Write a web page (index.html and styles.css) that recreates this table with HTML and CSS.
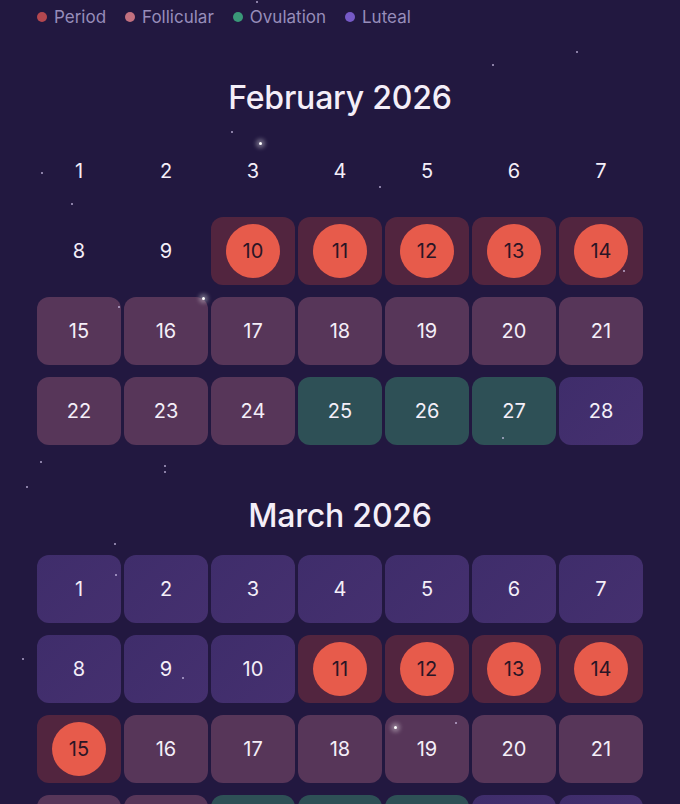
FILE: index.html
```html
<!DOCTYPE html>
<html>
<head>
<meta charset="utf-8">
<link rel="stylesheet" href="styles.css">
</head>
<body>
<div class="page">
  <div class="stars">
    <span class="star glow" style="left:259px;top:142px"></span>
    <span class="star glow" style="left:202px;top:297px"></span>
    <span class="star glow" style="left:394px;top:726px"></span>
    <span class="star" style="left:492px;top:64px"></span>
    <span class="star" style="left:576px;top:51px"></span>
    <span class="star" style="left:41px;top:172px"></span>
    <span class="star" style="left:164px;top:471px"></span>
    <span class="star" style="left:379px;top:186px"></span>
    <span class="star" style="left:40px;top:461px"></span>
    <span class="star" style="left:71px;top:203px"></span>
    <span class="star" style="left:256px;top:1px"></span>
    <span class="star" style="left:231px;top:131px"></span>
    <span class="star" style="left:164px;top:465px"></span>
    <span class="star" style="left:114px;top:543px"></span>
    <span class="star" style="left:680px;top:498px"></span>
    <span class="star" style="left:115px;top:574px"></span>
    <span class="star" style="left:22px;top:658px"></span>
    <span class="star" style="left:455px;top:722px"></span>
    <span class="star" style="left:524px;top:817px"></span>
    <span class="star" style="left:182px;top:677px"></span>
    <span class="star" style="left:502px;top:437px"></span>
    <span class="star" style="left:623px;top:270px"></span>
    <span class="star" style="left:118px;top:306px"></span>
    <span class="star" style="left:26px;top:486px"></span>
  </div>

  <div class="legend">
    <span class="item"><i class="dot period"></i>Period</span>
    <span class="item"><i class="dot follicular"></i>Follicular</span>
    <span class="item"><i class="dot ovulation"></i>Ovulation</span>
    <span class="item"><i class="dot luteal"></i>Luteal</span>
  </div>

  <section class="month">
    <h2 class="title">February 2026</h2>
    <div class="grid">
      <div class="day">1</div><div class="day">2</div><div class="day">3</div><div class="day">4</div><div class="day">5</div><div class="day">6</div><div class="day">7</div>
      <div class="day">8</div><div class="day">9</div>
      <div class="day p"><span class="circle">10</span></div>
      <div class="day p"><span class="circle">11</span></div>
      <div class="day p"><span class="circle">12</span></div>
      <div class="day p"><span class="circle">13</span></div>
      <div class="day p"><span class="circle">14</span></div>
      <div class="day f">15</div><div class="day f">16</div><div class="day f">17</div><div class="day f">18</div><div class="day f">19</div><div class="day f">20</div><div class="day f">21</div>
      <div class="day f">22</div><div class="day f">23</div><div class="day f">24</div><div class="day o">25</div><div class="day o">26</div><div class="day o">27</div><div class="day l">28</div>
    </div>
  </section>

  <section class="month">
    <h2 class="title">March 2026</h2>
    <div class="grid">
      <div class="day l">1</div><div class="day l">2</div><div class="day l">3</div><div class="day l">4</div><div class="day l">5</div><div class="day l">6</div><div class="day l">7</div>
      <div class="day l">8</div><div class="day l">9</div><div class="day l">10</div>
      <div class="day p"><span class="circle">11</span></div>
      <div class="day p"><span class="circle">12</span></div>
      <div class="day p"><span class="circle">13</span></div>
      <div class="day p"><span class="circle">14</span></div>
      <div class="day p"><span class="circle">15</span></div>
      <div class="day f">16</div><div class="day f">17</div><div class="day f">18</div><div class="day f">19</div><div class="day f">20</div><div class="day f">21</div>
      <div class="day f">22</div><div class="day f">23</div><div class="day o">24</div><div class="day o">25</div><div class="day o">26</div><div class="day l">27</div><div class="day l">28</div>
    </div>
  </section>
</div>
</body>
</html>
```

FILE: styles.css
```css
* { box-sizing: border-box; }
html, body {
  margin: 0;
  padding: 0;
  background: #221840;
}
body {
  font-family: Inter, Roboto, "Noto Sans", sans-serif;
  color: #f3eef8;
  overflow: hidden;
  height: 804px;
}
.page {
  position: relative;
  padding: 0 37px;
}
.stars {
  position: absolute;
  inset: 0;
  pointer-events: none;
  z-index: 2;
}
.star {
  position: absolute;
  width: 2px;
  height: 2px;
  border-radius: 50%;
  background: rgba(220, 210, 245, 0.75);
}
.star.glow {
  width: 3px;
  height: 3px;
  background: #fff;
  box-shadow: 0 0 4px 3px rgba(255, 255, 255, 0.35);
}
.legend {
  height: 34px;
  display: flex;
  align-items: center;
  gap: 19px;
  font-size: 17px;
  color: #978dba;
}
.item {
  display: flex;
  align-items: center;
  gap: 7px;
}
.dot {
  display: inline-block;
  width: 10px;
  height: 10px;
  border-radius: 50%;
}
.dot.period { background: #b4474f; }
.dot.follicular { background: #c2707f; }
.dot.ovulation { background: #3a9878; }
.dot.luteal { background: #7659c6; }

.month {
  margin-top: 44px;
}
.month + .month {
  margin-top: 51px;
}
.title {
  margin: 0 0 19px;
  height: 40px;
  line-height: 40px;
  text-align: center;
  font-size: 32px;
  font-weight: 500;
  color: #f4eef8;
  letter-spacing: -0.2px;
}
.grid {
  display: grid;
  grid-template-columns: repeat(7, 84px);
  grid-auto-rows: 68px;
  column-gap: 3px;
  row-gap: 12px;
}
.day {
  display: flex;
  align-items: center;
  justify-content: center;
  font-size: 20px;
  border-radius: 12px;
  color: #f4eef8;
}
.day.f { background: #573659; }
.day.p { background: #52253f; }
.day.o { background: #2e5056; }
.day.l { background: linear-gradient(135deg, #3f2d6b, #45306f); }
.circle {
  width: 54px;
  height: 54px;
  border-radius: 50%;
  background: #e75b4b;
  color: #2a1526;
  display: flex;
  align-items: center;
  justify-content: center;
  font-size: 20px;
}
```
